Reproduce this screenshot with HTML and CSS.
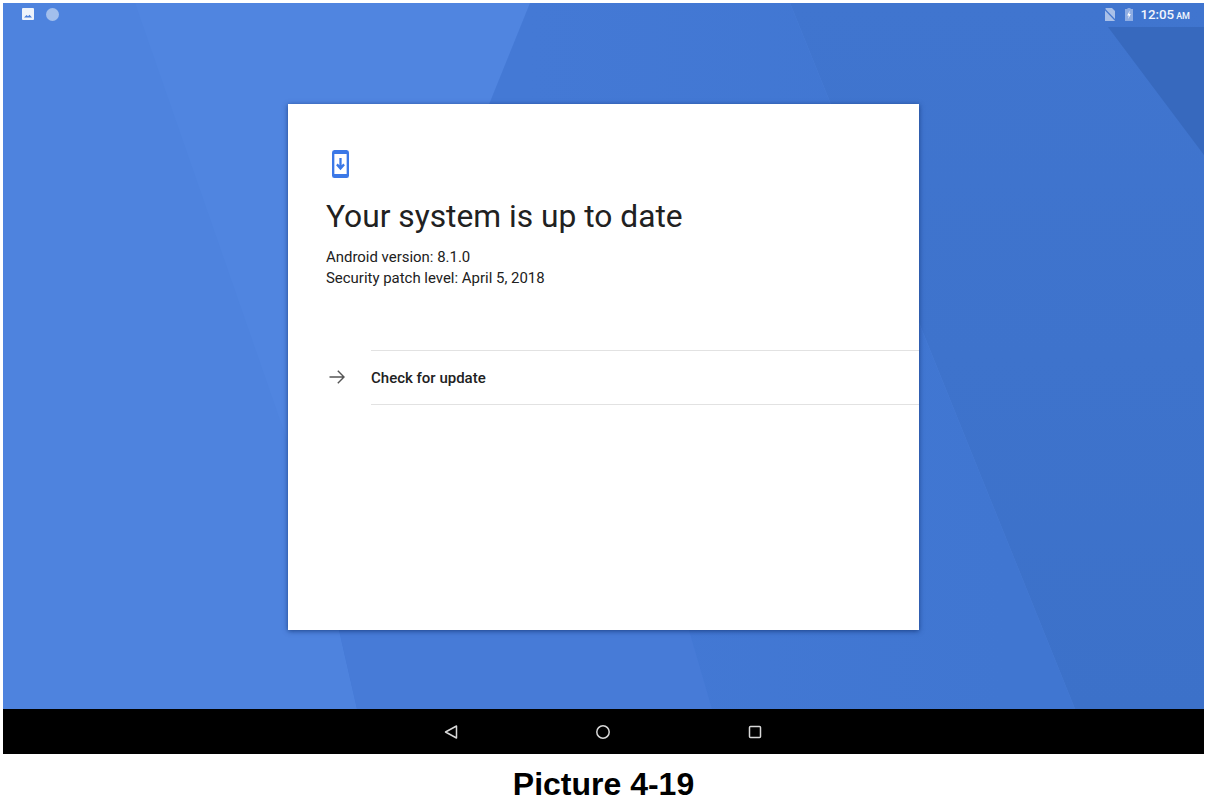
FILE: index.html
```html
<!DOCTYPE html>
<html lang="en">
  <head>
    <meta charset="UTF-8" />
    <meta name="viewport" content="width=device-width, initial-scale=1.0" />
    <title>Picture 4-19</title>
    <link rel="stylesheet" href="styles.css">
  </head>
  <body>
    <div class="screen">
      <div class="wallpaper">
        <!-- Wallpaper facets -->
        <svg class="facets" viewBox="0 0 1201 706" preserveAspectRatio="none" aria-hidden="true">
          <defs>
            <linearGradient id="midFacet" gradientUnits="userSpaceOnUse" x1="527" y1="0" x2="1000" y2="0">
              <stop offset="0" stop-color="#4479d5" />
              <stop offset="1" stop-color="#4076d1" />
            </linearGradient>
            <linearGradient id="rightFacet" gradientUnits="userSpaceOnUse" x1="0" y1="0" x2="0" y2="706">
              <stop offset="0" stop-color="#4075cf" />
              <stop offset="1" stop-color="#3c71c9" />
            </linearGradient>
          </defs>
          <rect width="1201" height="706" fill="#4e83de" />
          <polygon points="132,0 527,0 485,104 285,440" fill="#5085e0" />
          <polygon points="527,0 787,0 1072,706 354,706 336,627 485,104" fill="url(#midFacet)" />
          <polygon points="336,627 686,627 709,706 354,706" fill="#477bd7" />
          <polygon points="787,0 1201,0 1201,706 1072,706" fill="url(#rightFacet)" />
          <polygon points="1105,24 1201,24 1201,152" fill="#3769be" />
        </svg>

        <!-- Status bar -->
        <div class="status-bar">
          <div class="status-left">
            <svg class="notif-icon" viewBox="0 0 12 12" aria-hidden="true">
              <rect width="12" height="12" rx="1" fill="#eef3fb" />
              <path d="M2 9.5 L4.5 7 L6 8.3 L7.5 6.8 L10 9.5 Z" fill="#4b80dc" />
            </svg>
            <span class="notif-dot"></span>
          </div>
          <div class="status-right">
            <svg class="sim-icon" viewBox="0 0 12 13" aria-hidden="true">
              <path d="M2 0 H8 L11 3 V13 H1 V1 Z" fill="#a9c0e8" />
              <path d="M0.5 1 L11.5 12.5" stroke="#4477cf" stroke-width="1.2" />
            </svg>
            <svg class="battery-icon" viewBox="0 0 8 13" aria-hidden="true">
              <path d="M2.5 0 H5.5 V1 H8 V13 H0 V1 H2.5 Z" fill="#8fade3" />
              <path d="M4.8 2.5 L2.2 7.5 H3.8 L3.2 11 L5.8 6 H4.2 Z" fill="#fff" />
            </svg>
            <span class="clock">12:05<span class="ampm">AM</span></span>
          </div>
        </div>

        <!-- Update card -->
        <main class="card-area">
          <section class="card">
            <svg class="update-icon" viewBox="0 0 18 28" preserveAspectRatio="none" aria-hidden="true">
              <rect width="18" height="28" rx="2.5" fill="#3b78e7" />
              <rect x="2.5" y="4" width="13" height="20" fill="#fff" />
              <path d="M9 8 V18 M5.2 14.4 L9 18.4 L12.8 14.4" fill="none" stroke="#3b78e7" stroke-width="2.4" />
            </svg>
            <h1>Your system is up to date</h1>
            <p class="version">Android version: 8.1.0<br />Security patch level: April 5, 2018</p>

            <div class="update-row">
              <svg class="arrow-icon" viewBox="0 0 16 14" aria-hidden="true">
                <path d="M0.5 7 H15 M8.8 0.8 L15 7 L8.8 13.2" fill="none" stroke="#555" stroke-width="1.4" />
              </svg>
              <div class="update-label">Check for update</div>
            </div>
          </section>
        </main>
      </div>

      <!-- Navigation bar -->
      <nav class="nav-bar">
        <svg class="nav-icon" viewBox="0 0 14 14" aria-hidden="true">
          <path d="M12.5 1 V13 L1.5 7 Z" fill="none" stroke="#d8d8d8" stroke-width="1.5" stroke-linejoin="round" />
        </svg>
        <svg class="nav-icon" viewBox="0 0 14 14" aria-hidden="true">
          <circle cx="7" cy="7" r="6.2" fill="none" stroke="#d8d8d8" stroke-width="1.5" />
        </svg>
        <svg class="nav-icon" viewBox="0 0 14 14" aria-hidden="true">
          <rect x="1.5" y="1.5" width="11" height="11" rx="1" fill="none" stroke="#d8d8d8" stroke-width="1.5" />
        </svg>
      </nav>
    </div>

    <p class="caption">Picture 4-19</p>
  </body>
</html>
```

FILE: styles.css
```css
html,
body {
  height: 100%;
}

body {
  margin: 0;
  padding: 3px 5px 0 3px;
  box-sizing: border-box;
  background: #fff;
  font-family: Roboto, sans-serif;
  overflow: hidden;
}

.screen {
  display: flex;
  flex-direction: column;
  height: 751px;
}

.wallpaper {
  position: relative;
  flex: 1;
  display: flex;
  flex-direction: column;
}

.facets {
  position: absolute;
  inset: 0;
  width: 100%;
  height: 100%;
}

.status-bar {
  position: relative;
  display: flex;
  justify-content: space-between;
  align-items: center;
  height: 22px;
  padding: 0 14px 2px 19px;
}

.status-left,
.status-right {
  display: flex;
  align-items: center;
}

.notif-icon {
  width: 12px;
  height: 12px;
}

.notif-dot {
  width: 13px;
  height: 13px;
  margin-left: 12px;
  border-radius: 50%;
  background: #a3bfec;
}

.sim-icon {
  width: 12px;
  height: 13px;
}

.battery-icon {
  width: 8px;
  height: 13px;
  margin-left: 9px;
}

.clock {
  margin-left: 7px;
  color: #f2f6fd;
  font-size: 13.3px;
  font-weight: 500;
}

.ampm {
  margin-left: 2px;
  font-size: 9px;
}

.card-area {
  position: relative;
  flex: 1;
  display: flex;
  justify-content: center;
  align-items: center;
  padding-bottom: 3px;
}

.card {
  width: 631px;
  height: 526px;
  padding: 46px 0 0 38px;
  box-sizing: border-box;
  background: #fff;
  box-shadow: 0 1px 5px rgba(10, 40, 100, 0.7);
}

.update-icon {
  display: block;
  width: 17px;
  height: 28px;
  margin-left: 6px;
}

h1 {
  margin: 19px 0 0;
  color: #212121;
  font-size: 31.75px;
  font-weight: 400;
  line-height: 40px;
}

.version {
  margin: 10px 0 0;
  color: #212121;
  font-size: 14.95px;
  line-height: 21px;
}

.update-row {
  display: flex;
  align-items: center;
  margin-top: 61px;
}

.arrow-icon {
  width: 16px;
  height: 14px;
  margin: 0 26px 0 3px;
}

.update-label {
  flex: 1;
  padding: 19px 0 17px;
  border-top: 1px solid #e2e2e2;
  border-bottom: 1px solid #e2e2e2;
  color: #212121;
  font-size: 15px;
  font-weight: 500;
  line-height: 17px;
}

.nav-bar {
  display: flex;
  justify-content: center;
  align-items: center;
  gap: 138px;
  height: 45px;
  padding-right: 1px;
  background: #000;
}

.nav-icon {
  width: 14px;
  height: 14px;
}

.caption {
  margin: 12px 0 0;
  color: #000;
  font-family: "Liberation Sans", sans-serif;
  font-size: 32px;
  font-weight: 700;
  line-height: 36px;
  text-align: center;
}
```
